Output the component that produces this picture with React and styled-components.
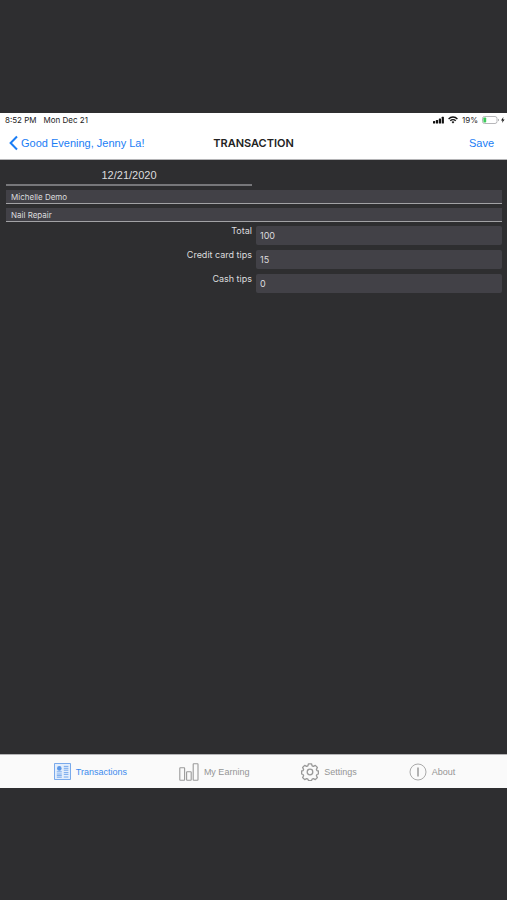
import React, { useState } from "react";
import styled, { createGlobalStyle } from "styled-components";

const GlobalStyle = createGlobalStyle`
  * {
    box-sizing: border-box;
  }
  body {
    margin: 0;
    background: #2e2e30;
    font-family: Inter, "Liberation Sans", sans-serif;
  }
  button, input {
    font-family: inherit;
  }
`;

const ChevronIcon = () => (
  <svg width="9" height="16" viewBox="0 0 9 16" fill="none" stroke="currentColor" strokeWidth="2">
    <path d="M8 1.5 1.6 8 8 14.5" />
  </svg>
);

const SignalIcon = () => (
  <svg width="11" height="8" viewBox="0 0 11 8" fill="#111">
    <rect x="0" y="5" width="2.2" height="2.5" rx="0.5" />
    <rect x="2.9" y="4" width="2.2" height="3.5" rx="0.5" />
    <rect x="5.8" y="2.5" width="2.2" height="5" rx="0.5" />
    <rect x="8.7" y="0.8" width="2.2" height="6.7" rx="0.5" />
  </svg>
);

const WifiIcon = () => (
  <svg width="10" height="8" viewBox="0 0 10 8" fill="none" stroke="#111" strokeWidth="1.4">
    <path d="M0.6 2.9a6.2 6.2 0 0 1 8.8 0" />
    <path d="M2.3 4.8a3.8 3.8 0 0 1 5.4 0" />
    <path d="M3.6 6 5 7.6 6.4 6a2 2 0 0 0-2.8 0z" fill="#111" stroke="none" />
  </svg>
);

const BatteryIcon = () => (
  <svg width="23" height="8" viewBox="0 0 23 8">
    <rect x="0.5" y="0.5" width="14.5" height="7" rx="2" fill="#fff" stroke="#a5a5a8" strokeWidth="0.8" />
    <rect x="1.4" y="1.4" width="2.8" height="5.2" rx="0.8" fill="#3ccb5a" />
    <path d="M16 2.8v2.4q1-.3 1-1.2t-1-1.2z" fill="#a5a5a8" />
    <path d="M21.4 1 19 4.4h1.6L20 7l2.6-3.4H21z" fill="#111" />
  </svg>
);

const TransactionsIcon = () => (
  <svg width="17" height="17" viewBox="0 0 17 17" fill="none" stroke="#5c98e8" strokeWidth="0.8">
    <rect x="0.6" y="0.6" width="15.8" height="15.8" fill="#e3eefc" />
    <circle cx="5.3" cy="5.4" r="2.3" fill="#5c98e8" stroke="none" />
    <path d="M2.8 8.8h5M9.8 3.4h4.6M9.8 5.3h4.6M9.8 7.2h4.6M2.8 11h5M2.8 12.6h5M2.8 14.2h5M9.8 9.6h4.6M9.8 11.4h4.6M9.8 14h4.6" />
  </svg>
);

const EarningIcon = () => (
  <svg width="20" height="18" viewBox="0 0 20 18" fill="none" stroke="#9a9a9a" strokeWidth="1.1">
    <rect x="0.8" y="4.8" width="4.8" height="12.4" rx="0.5" />
    <rect x="7.6" y="8.8" width="4.6" height="8.4" rx="0.5" />
    <rect x="14.2" y="0.8" width="4.8" height="16.4" rx="0.5" />
  </svg>
);

const SettingsIcon = () => (
  <svg width="18" height="18" viewBox="0 0 18 18" fill="none" stroke="#999" strokeWidth="1.3" strokeLinejoin="round">
    <path d="M7.5 0.8h3l.6 2 1.3.6 1.9-1 2.1 2.1-1 1.9.5 1.2 1.5.4v3l-1.5.5-.5 1.2 1 1.8-2.1 2.1-1.9-1-1.3.6-.6 1.4h-3l-.6-1.4-1.3-.6-1.9 1-2.1-2.1 1-1.8-.5-1.2-1.5-.5V8l1.5-.4.5-1.2-1-1.9 2.1-2.1 1.9 1 1.3-.6z" />
    <circle cx="9" cy="9" r="2.8" />
  </svg>
);

const AboutIcon = () => (
  <svg width="18" height="18" viewBox="0 0 18 18" fill="none" stroke="#a0a0a0">
    <circle cx="9" cy="9" r="8" strokeWidth="0.9" />
    <path d="M9 4.6v8.8" strokeWidth="1.6" />
  </svg>
);

const TABS = [
  { label: "Transactions", Icon: TransactionsIcon },
  { label: "My Earning", Icon: EarningIcon },
  { label: "Settings", Icon: SettingsIcon },
  { label: "About", Icon: AboutIcon },
];

const AMOUNTS = [
  { name: "total", label: "Total" },
  { name: "creditTips", label: "Credit card tips" },
  { name: "cashTips", label: "Cash tips" },
];

const App = () => {
  const [tab, setTab] = useState("Transactions");
  const [form, setForm] = useState({
    date: "12/21/2020",
    customer: "Michelle Demo",
    service: "Nail Repair",
    total: "100",
    creditTips: "15",
    cashTips: "0",
  });

  const onChange = (e) => {
    setForm({ ...form, [e.target.name]: e.target.value });
  };

  return (
    <>
      <GlobalStyle />
      <Page>
        <Header>
          <StatusBar>
            <span>8:52 PM</span>
            <span>Mon Dec 21</span>
            <StatusRight>
              <SignalIcon />
              <WifiIcon />
              <span>19%</span>
              <BatteryIcon />
            </StatusRight>
          </StatusBar>
          <NavBar>
            <NavButton>
              <ChevronIcon />
              Good Evening, Jenny La!
            </NavButton>
            <Title>TRANSACTION</Title>
            <NavButton $end>Save</NavButton>
          </NavBar>
        </Header>
        <Form>
          <DateInput name="date" aria-label="Date" value={form.date} onChange={onChange} />
          <LineInput name="customer" aria-label="Customer" value={form.customer} onChange={onChange} />
          <LineInput name="service" aria-label="Service" value={form.service} onChange={onChange} />
          <Amounts>
            {AMOUNTS.map(({ name, label }) => (
              <AmountRow key={name}>
                <AmountLabel htmlFor={name}>{label}</AmountLabel>
                <AmountInput id={name} name={name} inputMode="decimal" value={form[name]} onChange={onChange} />
              </AmountRow>
            ))}
          </Amounts>
        </Form>
        <TabBar>
          {TABS.map(({ label, Icon }) => (
            <TabButton key={label} $active={tab === label} onClick={() => setTab(label)}>
              <Icon />
              {label}
            </TabButton>
          ))}
        </TabBar>
      </Page>
    </>
  );
};

const Page = styled.div`
  min-height: 100vh;
  padding: 113px 0 112px;
  display: flex;
  flex-direction: column;
`;

const Header = styled.header`
  background: #fff;
  border-bottom: 1px solid #b4b4b6;
`;

const StatusBar = styled.div`
  display: flex;
  align-items: center;
  gap: 7px;
  height: 14px;
  padding: 0 2px 0 5px;
  font-size: 8px;
  line-height: 14px;
  color: #222;
`;

const StatusRight = styled.div`
  display: flex;
  align-items: center;
  gap: 4px;
  margin-left: auto;
`;

const NavBar = styled.nav`
  display: grid;
  grid-template-columns: 1fr auto 1fr;
  align-items: center;
  height: 32px;
`;

const NavButton = styled.button`
  display: flex;
  align-items: center;
  gap: 3px;
  justify-self: ${props => props.$end ? 'end' : 'start'};
  padding: 0 13px 0 9px;
  border: 0;
  background: none;
  color: #1a7df5;
  font-family: "Liberation Sans", sans-serif;
  font-size: 11px;
  line-height: 16px;
  cursor: pointer;
`;

const Title = styled.h1`
  margin: 0;
  color: #222;
  font-size: 11px;
  font-weight: 600;
  line-height: 16px;
`;

const Form = styled.form`
  flex: 1;
  display: flex;
  flex-direction: column;
  gap: 4px;
  padding: 6px 5px 6px 6px;
`;

const Field = styled.input`
  width: 100%;
  min-width: 0;
  border: 0;
  border-radius: 0;
  outline: none;
  background: #424147;
  color: #dcdcde;
  font-size: 8px;
`;

const DateInput = styled(Field)`
  width: calc(50% - 2px);
  height: 20px;
  padding: 0;
  border-bottom: 2px solid #77777a;
  background: none;
  font-family: "Liberation Sans", sans-serif;
  font-size: 11px;
  text-align: center;
`;

const LineInput = styled(Field)`
  height: 14px;
  padding: 0 5px;
  border-bottom: 1px solid #a2a2a5;
`;

const Amounts = styled.div`
  display: flex;
  flex-direction: column;
  gap: 5px;
`;

const AmountRow = styled.div`
  display: grid;
  grid-template-columns: 1fr 1fr;
  gap: 4px;
`;

const AmountLabel = styled.label`
  color: #dcdcde;
  font-size: 9px;
  line-height: 10px;
  text-align: right;
`;

const AmountInput = styled(Field)`
  height: 19px;
  padding: 0 4px;
  border-radius: 2px;
  font-size: 9px;
`;

const TabBar = styled.nav`
  display: flex;
  justify-content: space-evenly;
  height: 34px;
  padding-left: 2px;
  border-top: 1px solid #b4b4b6;
  background: #fafafa;
`;

const TabButton = styled.button`
  display: flex;
  align-items: center;
  gap: 5px;
  padding: 0;
  border: 0;
  background: none;
  color: ${props => props.$active ? '#3d8bee' : '#959595'};
  font-family: "Liberation Sans", sans-serif;
  font-size: 9px;
  cursor: pointer;
`;

export default App;
